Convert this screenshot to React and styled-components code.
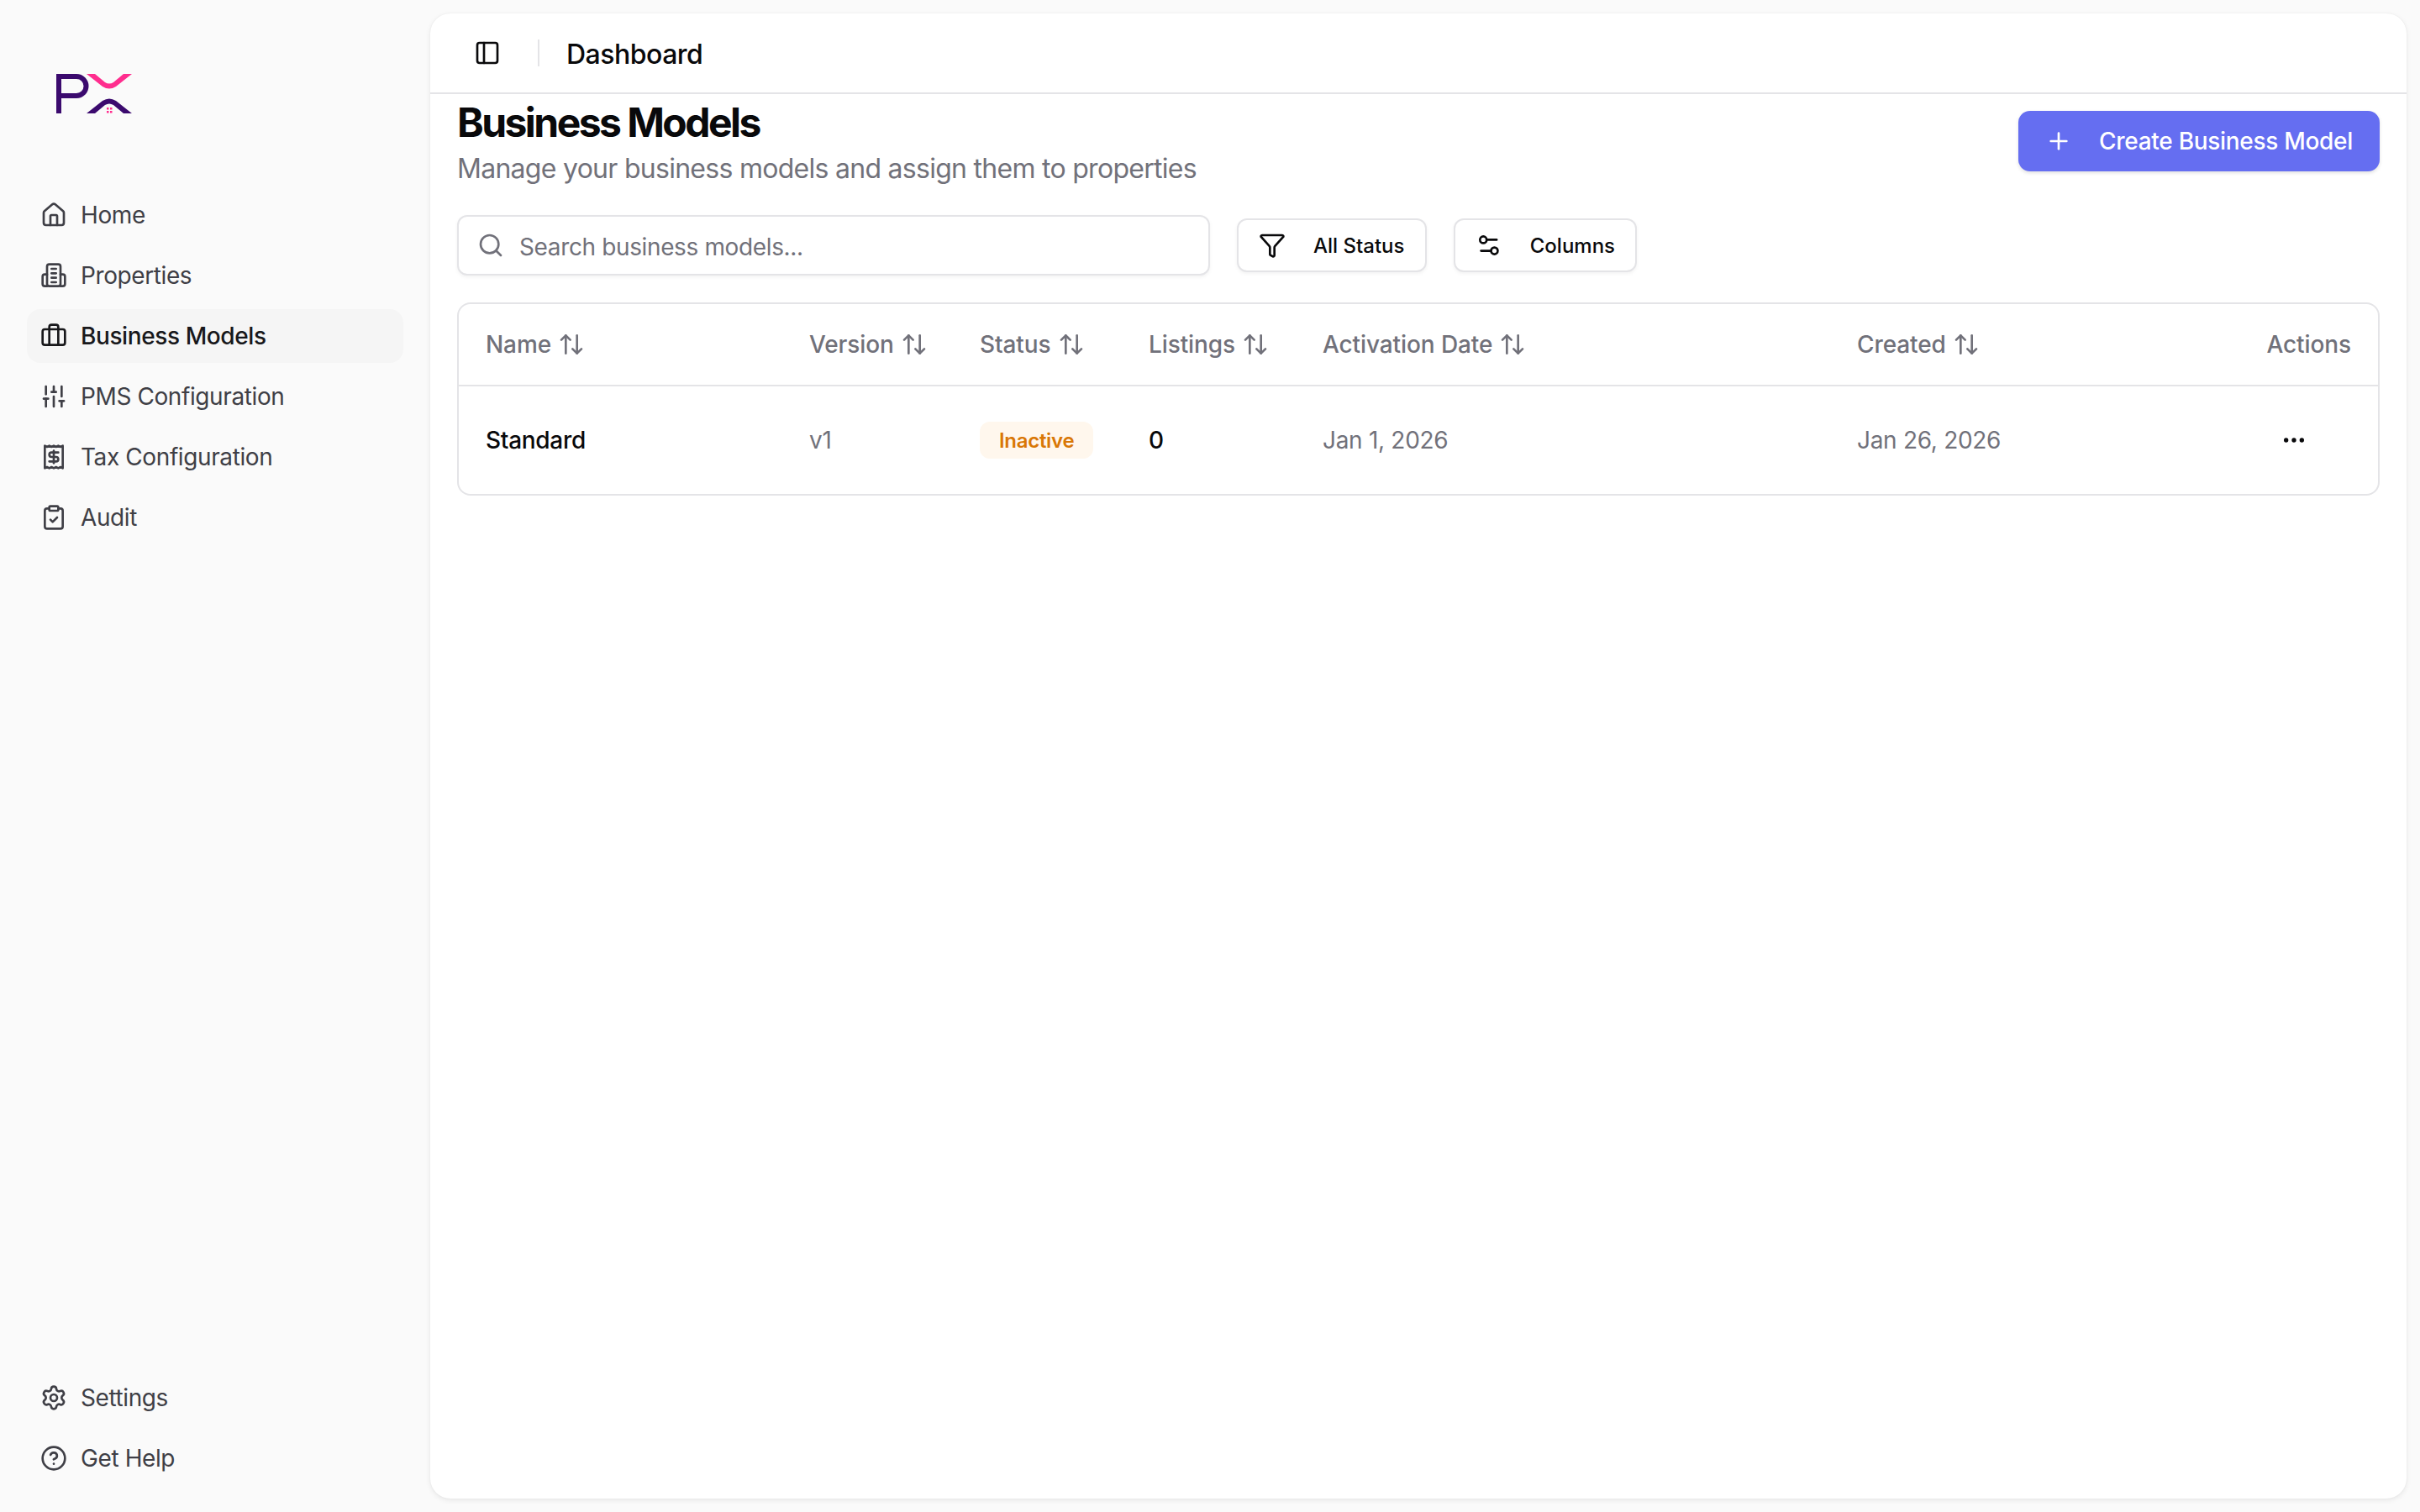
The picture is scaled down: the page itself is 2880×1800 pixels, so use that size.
import React from "react";
import styled, { createGlobalStyle } from "styled-components";
import {
  ArrowUpDown,
  Briefcase,
  CircleHelp,
  ClipboardCheck,
  Ellipsis,
  Funnel,
  House,
  PanelLeft,
  Plus,
  Receipt,
  Search,
  Settings,
  Settings2,
  SlidersVertical,
} from "lucide-react";

const GlobalStyle = createGlobalStyle`
  * {
    box-sizing: border-box;
  }

  body {
    margin: 0;
    background: #fafafa;
    color: #09090b;
    font-family: Inter, "Liberation Sans", sans-serif;
    -webkit-font-smoothing: antialiased;
  }
`;

const PropertiesIcon = () => (
  <svg width="32" height="32" viewBox="0 0 24 24" fill="none" stroke="currentColor" strokeWidth="2" strokeLinecap="round" strokeLinejoin="round">
    <rect x="6" y="2" width="12" height="19.5" rx="2" />
    <path d="M6 11H4a2 2 0 0 0-2 2v6.5a2 2 0 0 0 2 2h2" />
    <path d="M18 11h2a2 2 0 0 1 2 2v6.5a2 2 0 0 1-2 2h-2" />
    <path d="M10 6h4" />
    <path d="M10 10h4" />
    <path d="M10 14h4" />
    <path d="M10 18h4" />
  </svg>
);

const Logo = () => (
  <LogoMark width="110" height="60" viewBox="0 0 110 60">
    <path d="M10 55V11H31a11.5 11.5 0 0 1 0 23H10" fill="none" stroke="#3b0a6e" strokeWidth="6" />
    <path d="M43 8H53L65 18Q70 21 75 18L87 8H97L78 23Q70 28 62 23Z" fill="#ff2d8e" />
    <path d="M43 55H53L65 45Q70 42 75 45L87 55H97L78 40Q70 35 62 40Z" fill="#3b0a6e" />
    <g fill="#ff2d8e">
      <rect x="67" y="48" width="2.5" height="2.5" />
      <rect x="71" y="48" width="2.5" height="2.5" />
      <rect x="67" y="52" width="2.5" height="2.5" />
      <rect x="71" y="52" width="2.5" height="2.5" />
    </g>
  </LogoMark>
);

const mainLinks = [
  { label: "Home", icon: <House size={32} /> },
  { label: "Properties", icon: <PropertiesIcon /> },
  { label: "Business Models", icon: <Briefcase size={32} />, active: true },
  { label: "PMS Configuration", icon: <SlidersVertical size={32} /> },
  { label: "Tax Configuration", icon: <Receipt size={32} /> },
  { label: "Audit", icon: <ClipboardCheck size={32} /> },
];

const footerLinks = [
  { label: "Settings", icon: <Settings size={32} /> },
  { label: "Get Help", icon: <CircleHelp size={32} /> },
];

const sortableColumns = ["Name", "Version", "Status", "Listings", "Activation Date", "Created"];

const NavList = ({ links }) => (
  <Nav>
    {links.map((link) => (
      <NavItem key={link.label} $active={link.active}>
        {link.icon}
        <span>{link.label}</span>
      </NavItem>
    ))}
  </Nav>
);

const App = () => (
  <Shell>
    <GlobalStyle />
    <Sidebar>
      <Logo />
      <NavList links={mainLinks} />
      <Spacer />
      <NavList links={footerLinks} />
    </Sidebar>
    <Panel>
      <TopBar>
        <PanelLeft size={32} />
        <Divider />
        <TopBarTitle>Dashboard</TopBarTitle>
      </TopBar>
      <Content>
        <PageHeader>
          <div>
            <Title>Business Models</Title>
            <Subtitle>Manage your business models and assign them to properties</Subtitle>
          </div>
          <CreateButton>
            <Plus size={32} />
            Create Business Model
          </CreateButton>
        </PageHeader>
        <Toolbar>
          <SearchBox>
            <Search size={32} />
            <SearchInput placeholder="Search business models..." />
          </SearchBox>
          <ToolButton $width={226}>
            <Funnel size={32} />
            All Status
          </ToolButton>
          <ToolButton $width={218}>
            <Settings2 size={32} />
            Columns
          </ToolButton>
        </Toolbar>
        <Table>
          <HeaderRow>
            {sortableColumns.map((name) => (
              <HeaderCell key={name}>
                {name}
                <ArrowUpDown size={32} />
              </HeaderCell>
            ))}
            <HeaderCell $right>Actions</HeaderCell>
          </HeaderRow>
          <BodyRow>
            <Cell $strong>Standard</Cell>
            <Cell>v1</Cell>
            <Cell>
              <Badge>Inactive</Badge>
            </Cell>
            <Cell $strong>0</Cell>
            <Cell>Jan 1, 2026</Cell>
            <Cell>Jan 26, 2026</Cell>
            <Cell $right>
              <MoreButton>
                <Ellipsis size={32} />
              </MoreButton>
            </Cell>
          </BodyRow>
        </Table>
      </Content>
    </Panel>
  </Shell>
);

const Shell = styled.div`
  display: flex;
  height: 100vh;
  min-height: 1800px;
`;

const Sidebar = styled.aside`
  display: flex;
  flex-direction: column;
  flex: 0 0 512px;
  padding: 80px 32px 32px;
`;

const LogoMark = styled.svg`
  display: block;
  margin: 0 0 84px 28px;
`;

const Nav = styled.nav`
  display: flex;
  flex-direction: column;
  gap: 8px;
`;

const NavItem = styled.a`
  display: flex;
  align-items: center;
  gap: 16px;
  height: 64px;
  padding: 0 16px;
  border-radius: 16px;
  background: ${(p) => (p.$active ? "#f5f5f5" : "transparent")};
  color: ${(p) => (p.$active ? "#18181b" : "#3f3f46")};
  font-size: 28px;
  font-weight: ${(p) => (p.$active ? 500 : 400)};
  letter-spacing: -0.4px;
`;

const Spacer = styled.div`
  flex: 1;
`;

const Panel = styled.main`
  flex: 1;
  margin: 16px 16px 16px 0;
  border-radius: 24px;
  background: #fff;
  box-shadow: 0 2px 6px rgba(0, 0, 0, 0.08), 0 0 2px rgba(0, 0, 0, 0.06);
`;

const TopBar = styled.header`
  display: flex;
  align-items: center;
  height: 96px;
  padding-left: 52px;
  border-bottom: 2px solid #e4e4e7;
`;

const Divider = styled.div`
  width: 2px;
  height: 32px;
  margin: 0 32px 0 44px;
  background: #e4e4e7;
`;

const TopBarTitle = styled.h1`
  margin: 2px 0 0;
  font-size: 32px;
  font-weight: 500;
  letter-spacing: -0.5px;
`;

const Content = styled.div`
  padding: 6px 32px 0 32px;
`;

const PageHeader = styled.div`
  display: flex;
  justify-content: space-between;
  align-items: flex-start;
`;

const Title = styled.h2`
  margin: 0 0 3px;
  font-size: 48px;
  line-height: 56px;
  font-weight: 700;
  letter-spacing: -2.55px;
  color: #09090b;
`;

const Subtitle = styled.p`
  margin: 0;
  font-size: 32px;
  line-height: 48px;
  letter-spacing: -0.72px;
  color: #71717a;
`;

const CreateButton = styled.button`
  display: flex;
  align-items: center;
  gap: 32px;
  height: 72px;
  margin-top: 14px;
  padding: 0 32px;
  border: 0;
  border-radius: 14px;
  background: #656ef1;
  box-shadow: 0 2px 4px rgba(0, 0, 0, 0.12);
  color: #fff;
  font: 500 28px Inter, sans-serif;
  letter-spacing: -0.3px;
`;

const Toolbar = styled.div`
  display: flex;
  align-items: center;
  gap: 32px;
  margin-top: 31px;
`;

const SearchBox = styled.label`
  display: flex;
  align-items: center;
  gap: 18px;
  width: 896px;
  height: 72px;
  padding: 0 22px;
  border: 2px solid #e4e4e7;
  border-radius: 12px;
  background: #fff;
  box-shadow: 0 2px 4px rgba(0, 0, 0, 0.05);
  color: #71717a;
`;

const SearchInput = styled.input`
  flex: 1;
  padding: 4px 0 0;
  border: 0;
  outline: 0;
  background: transparent;
  font: 400 28px Inter, sans-serif;
  letter-spacing: -0.37px;

  &::placeholder {
    color: #71717a;
    opacity: 1;
  }
`;

const ToolButton = styled.button`
  display: flex;
  align-items: center;
  gap: 33px;
  width: ${(p) => p.$width}px;
  height: 64px;
  padding: 0 24px;
  border: 2px solid #e4e4e7;
  border-radius: 12px;
  background: #fff;
  box-shadow: 0 2px 4px rgba(0, 0, 0, 0.05);
  color: #09090b;
  font: 500 24px Inter, sans-serif;
  white-space: nowrap;
`;

const Table = styled.div`
  margin-top: 32px;
  border: 2px solid #e4e4e7;
  border-radius: 16px;
`;

const columns = "385px 203px 201px 207px 636px 460px 1fr";

const HeaderRow = styled.div`
  display: grid;
  grid-template-columns: ${columns};
  height: 98px;
  border-bottom: 2px solid #e4e4e7;
`;

const BodyRow = styled.div`
  display: grid;
  grid-template-columns: ${columns};
  height: 128px;
`;

const HeaderCell = styled.div`
  display: flex;
  align-items: center;
  justify-content: ${(p) => (p.$right ? "flex-end" : "flex-start")};
  gap: 8px;
  padding: 0 32px;
  color: #71717a;
  font-size: 28px;
  font-weight: 500;
  letter-spacing: -0.1px;
  white-space: nowrap;

  svg {
    flex: none;
  }
`;

const Cell = styled.div`
  display: flex;
  align-items: center;
  justify-content: ${(p) => (p.$right ? "flex-end" : "flex-start")};
  padding: 0 32px;
  color: ${(p) => (p.$strong ? "#09090b" : "#71717a")};
  font-size: 28px;
  font-weight: ${(p) => (p.$strong ? 500 : 400)};
  letter-spacing: -0.3px;
`;

const Badge = styled.span`
  display: inline-flex;
  align-items: center;
  height: 44px;
  padding: 0 23px;
  border-radius: 12px;
  background: #fff7ed;
  color: #d97706;
  font-size: 24px;
  font-weight: 600;
`;

const MoreButton = styled.button`
  display: flex;
  align-items: center;
  justify-content: center;
  width: 64px;
  height: 64px;
  margin-right: 36px;
  padding: 0;
  border: 0;
  background: transparent;
  color: #09090b;
`;

export default App;
